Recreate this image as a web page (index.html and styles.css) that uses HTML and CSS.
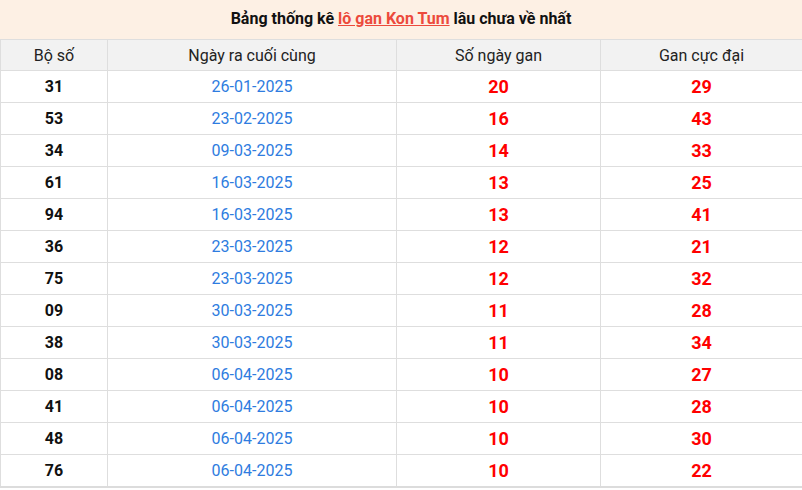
FILE: index.html
```html
<!DOCTYPE html>
<html lang="vi">
<head>
<meta charset="utf-8">
<link rel="stylesheet" href="styles.css">
</head>
<body>
<div class="title">Bảng thống kê <a class="title-link" href="#">lô gan Kon Tum</a> lâu chưa về nhất</div>
<table class="stats">
  <colgroup>
    <col class="c1"><col class="c2"><col class="c3"><col class="c4">
  </colgroup>
  <thead>
    <tr><th>Bộ số</th><th>Ngày ra cuối cùng</th><th>Số ngày gan</th><th>Gan cực đại</th></tr>
  </thead>
  <tbody>
    <tr><td class="num">31</td><td class="date">26-01-2025</td><td class="red">20</td><td class="red">29</td></tr>
    <tr><td class="num">53</td><td class="date">23-02-2025</td><td class="red">16</td><td class="red">43</td></tr>
    <tr><td class="num">34</td><td class="date">09-03-2025</td><td class="red">14</td><td class="red">33</td></tr>
    <tr><td class="num">61</td><td class="date">16-03-2025</td><td class="red">13</td><td class="red">25</td></tr>
    <tr><td class="num">94</td><td class="date">16-03-2025</td><td class="red">13</td><td class="red">41</td></tr>
    <tr><td class="num">36</td><td class="date">23-03-2025</td><td class="red">12</td><td class="red">21</td></tr>
    <tr><td class="num">75</td><td class="date">23-03-2025</td><td class="red">12</td><td class="red">32</td></tr>
    <tr><td class="num">09</td><td class="date">30-03-2025</td><td class="red">11</td><td class="red">28</td></tr>
    <tr><td class="num">38</td><td class="date">30-03-2025</td><td class="red">11</td><td class="red">34</td></tr>
    <tr><td class="num">08</td><td class="date">06-04-2025</td><td class="red">10</td><td class="red">27</td></tr>
    <tr><td class="num">41</td><td class="date">06-04-2025</td><td class="red">10</td><td class="red">28</td></tr>
    <tr><td class="num">48</td><td class="date">06-04-2025</td><td class="red">10</td><td class="red">30</td></tr>
    <tr><td class="num">76</td><td class="date">06-04-2025</td><td class="red">10</td><td class="red">22</td></tr>
  </tbody>
</table>
</body>
</html>
```
FILE: styles.css
```css
html, body {
  margin: 0;
  padding: 0;
  background: #fff;
}
body {
  font-family: Roboto, "Liberation Sans", Arial, sans-serif;
  color: #111;
  width: 802px;
}
.title {
  height: 39px;
  line-height: 38px;
  background: #fdf0e4;
  text-align: center;
  font-size: 16px;
  font-weight: 700;
  color: #111;
}
.title-link {
  color: #ec4a3c;
  text-decoration: underline;
}
.stats {
  width: 802px;
  border-collapse: collapse;
  table-layout: fixed;
  border-bottom: 2px solid #dcdcdc;
}
.c1 { width: 107px; }
.c2 { width: 289px; }
.c3 { width: 204px; }
.c4 { width: 202px; }
.stats th, .stats td {
  border: 1px solid #dedede;
  text-align: center;
  padding: 0;
}
.stats th {
  height: 30px;
  background: #f2f2f2;
  font-weight: 400;
  font-size: 16px;
  color: #222;
}
.stats td {
  height: 31px;
}
.num {
  font-size: 16px;
  font-weight: 700;
  color: #111;
}
.date {
  font-size: 16px;
  color: #2e7ce0;
}
.red {
  font-size: 18px;
  font-weight: 700;
  color: #ff0000;
}
```
